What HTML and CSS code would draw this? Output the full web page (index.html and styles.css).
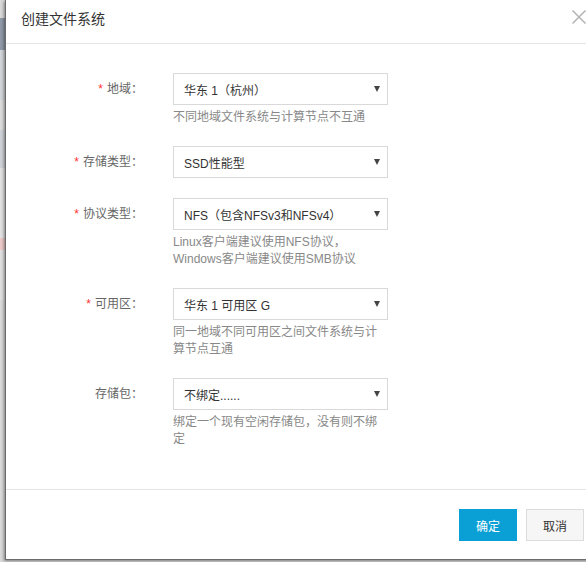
FILE: index.html
```html
<!DOCTYPE html>
<html lang="zh-CN">
<head>
<meta charset="utf-8">
<title>创建文件系统</title>
<link rel="stylesheet" href="styles.css">
</head>
<body>
<div class="modal">
  <div class="modal-header">
    <span class="modal-title">创建文件系统</span>
    <span class="close" aria-label="关闭">
      <svg width="14" height="14" viewBox="0 0 14 14"><path d="M0.5 0.5 L13.5 13.5 M13.5 0.5 L0.5 13.5" stroke="#b3b3b3" stroke-width="1.5" fill="none"/></svg>
    </span>
  </div>
  <div class="modal-body">
    <div class="form-row">
      <label class="form-label"><span class="req">*</span>地域：</label>
      <div class="form-control">
        <div class="select"><span>华东 1（杭州）</span><span class="caret"></span></div>
        <div class="help">不同地域文件系统与计算节点不互通</div>
      </div>
    </div>
    <div class="form-row">
      <label class="form-label"><span class="req">*</span>存储类型：</label>
      <div class="form-control">
        <div class="select"><span>SSD性能型</span><span class="caret"></span></div>
      </div>
    </div>
    <div class="form-row">
      <label class="form-label"><span class="req">*</span>协议类型：</label>
      <div class="form-control">
        <div class="select"><span>NFS（包含NFSv3和NFSv4）</span><span class="caret"></span></div>
        <div class="help">Linux客户端建议使用NFS协议，<br>Windows客户端建议使用SMB协议</div>
      </div>
    </div>
    <div class="form-row">
      <label class="form-label"><span class="req">*</span>可用区：</label>
      <div class="form-control">
        <div class="select"><span>华东 1 可用区 G</span><span class="caret"></span></div>
        <div class="help">同一地域不同可用区之间文件系统与计算节点互通</div>
      </div>
    </div>
    <div class="form-row">
      <label class="form-label">存储包：</label>
      <div class="form-control">
        <div class="select"><span>不绑定......</span><span class="caret"></span></div>
        <div class="help">绑定一个现有空闲存储包，没有则不绑定</div>
      </div>
    </div>
  </div>
  <div class="modal-footer">
    <button class="btn btn-primary">确定</button>
    <button class="btn btn-default">取消</button>
  </div>
</div>
</body>
</html>
```
FILE: styles.css
```css
html, body {
  margin: 0;
  padding: 0;
}
body {
  width: 586px;
  height: 562px;
  overflow: hidden;
  position: relative;
  font-family: "Liberation Sans", "Noto Sans CJK SC", sans-serif;
  font-size: 12px;
  color: #333;
  background: linear-gradient(to bottom,
    #d9d9d9 0 18px,
    #8f99a7 18px 50px,
    #d2d5d9 50px 100px,
    #dcdcdc 100px 130px,
    #cfd3d9 130px 168px,
    #e2e2e2 168px 238px,
    #eccaca 238px 250px,
    #e0e0e0 250px 300px,
    #dadada 300px);
}
.modal {
  position: absolute;
  left: 5px;
  top: 0;
  width: 601px;
  height: 560px;
  box-sizing: border-box;
  background: #fff;
  border-left: 1px solid #6b6b6b;
  border-bottom: 1px solid #6b6b6b;
  box-shadow: -1px 1px 3px rgba(0, 0, 0, 0.45);
  display: flex;
  flex-direction: column;
}
.modal-header {
  height: 44px;
  box-sizing: border-box;
  padding: 9px 20px 0 15px;
  border-bottom: 1px solid #e5e5e5;
  display: flex;
  justify-content: space-between;
  align-items: flex-start;
  flex: none;
}
.modal-title {
  font-size: 14px;
  line-height: 20px;
  color: #333;
}
.close {
  display: block;
  width: 14px;
  height: 14px;
  margin-top: 1px;
}
.close svg {
  display: block;
}
.modal-body {
  flex: 1;
  padding-top: 29px;
  display: flex;
  flex-direction: column;
  gap: 20px;
}
.form-row {
  display: grid;
  grid-template-columns: 137px 215px;
  column-gap: 30px;
  align-items: start;
}
.form-label {
  text-align: right;
  line-height: 32px;
  color: #666;
  white-space: nowrap;
}
.req {
  color: #f33;
  margin-right: 4px;
}
.select {
  height: 32px;
  box-sizing: border-box;
  border: 1px solid #d9d9d9;
  padding: 0 7px 0 10px;
  display: flex;
  align-items: center;
  justify-content: space-between;
  color: #333;
  background: #fff;
}
.caret {
  width: 0;
  height: 0;
  border-left: 3px solid transparent;
  border-right: 3px solid transparent;
  border-top: 6px solid #444;
}
.help {
  margin-top: 4px;
  line-height: 17px;
  color: #888;
}
.modal-footer {
  flex: none;
  border-top: 1px solid #e5e5e5;
  padding: 19px 22px 18px 0;
  display: flex;
  justify-content: flex-end;
  gap: 9px;
}
.btn {
  width: 58px;
  height: 32px;
  box-sizing: border-box;
  font-family: "Liberation Sans", "Noto Sans CJK SC", sans-serif;
  font-size: 12px;
  padding: 0;
  cursor: pointer;
}
.btn-primary {
  background: #0aa0d6;
  border: 1px solid #0aa0d6;
  color: #fff;
}
.btn-default {
  background: #f6f6f6;
  border: 1px solid #dcdcdc;
  color: #333;
}
```
